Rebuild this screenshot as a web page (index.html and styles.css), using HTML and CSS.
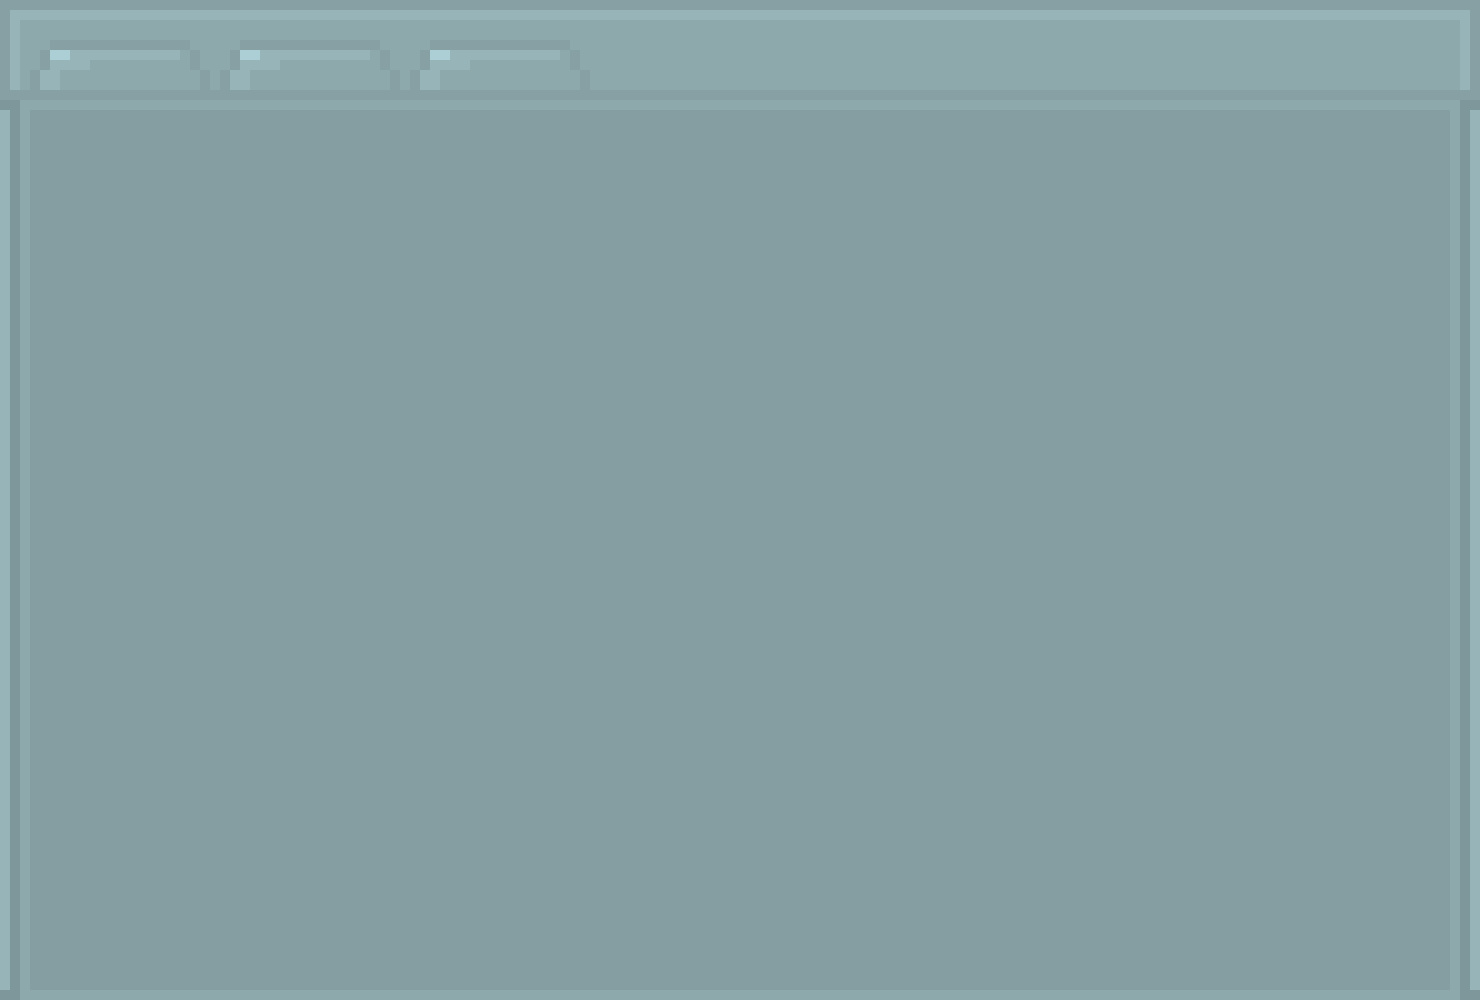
FILE: index.html
```html
<!DOCTYPE html>
<html lang="en">
<head>
<meta charset="utf-8">
<title>Window</title>
<link rel="stylesheet" href="styles.css">
</head>
<body>
<div class="screen">
  <header class="topbar">
    <nav class="tabs">
      <div class="tab">
        <svg width="180" height="50" viewBox="0 0 180 50" shape-rendering="crispEdges">
          <rect class="d" x="20" y="0" width="140" height="10"/>
          <rect class="d" x="10" y="10" width="10" height="20"/>
          <rect class="d" x="160" y="10" width="10" height="20"/>
          <rect class="d" x="0" y="30" width="10" height="20"/>
          <rect class="d" x="170" y="30" width="10" height="20"/>
          <rect class="h" x="20" y="10" width="20" height="10"/>
          <rect class="l" x="40" y="10" width="110" height="10"/>
          <rect class="l" x="20" y="20" width="40" height="10"/>
          <rect class="l" x="10" y="30" width="20" height="20"/>
        </svg>
      </div>
      <div class="tab">
        <svg width="180" height="50" viewBox="0 0 180 50" shape-rendering="crispEdges">
          <rect class="d" x="20" y="0" width="140" height="10"/>
          <rect class="d" x="10" y="10" width="10" height="20"/>
          <rect class="d" x="160" y="10" width="10" height="20"/>
          <rect class="d" x="0" y="30" width="10" height="20"/>
          <rect class="d" x="170" y="30" width="10" height="20"/>
          <rect class="h" x="20" y="10" width="20" height="10"/>
          <rect class="l" x="40" y="10" width="110" height="10"/>
          <rect class="l" x="20" y="20" width="40" height="10"/>
          <rect class="l" x="10" y="30" width="20" height="20"/>
        </svg>
      </div>
      <div class="tab">
        <svg width="180" height="50" viewBox="0 0 180 50" shape-rendering="crispEdges">
          <rect class="d" x="20" y="0" width="140" height="10"/>
          <rect class="d" x="10" y="10" width="10" height="20"/>
          <rect class="d" x="160" y="10" width="10" height="20"/>
          <rect class="d" x="0" y="30" width="10" height="20"/>
          <rect class="d" x="170" y="30" width="10" height="20"/>
          <rect class="h" x="20" y="10" width="20" height="10"/>
          <rect class="l" x="40" y="10" width="110" height="10"/>
          <rect class="l" x="20" y="20" width="40" height="10"/>
          <rect class="l" x="10" y="30" width="20" height="20"/>
        </svg>
      </div>
    </nav>
  </header>
  <main class="main">
    <div class="side"></div>
    <section class="panel"></section>
    <div class="side"></div>
  </main>
</div>
</body>
</html>
```
FILE: styles.css
```css
html, body {
  margin: 0;
  padding: 0;
  background: #86a0a4;
}
.screen {
  width: 1480px;
  height: 1000px;
  display: flex;
  flex-direction: column;
  background: #86a0a4;
  overflow: hidden;
}
.topbar {
  margin: 10px 10px 10px 10px;
  height: 80px;
  box-sizing: border-box;
  border: 10px solid #97b4b8;
  border-bottom: 0;
  background: #8ea9ac;
  padding: 20px 0 0 10px;
}
.tabs {
  display: flex;
  gap: 10px;
}
.tab {
  width: 180px;
  height: 50px;
}
.tab svg {
  display: block;
}
.tab .d { fill: #86a0a4; }
.tab .l { fill: #97b4b8; }
.tab .h { fill: #abcfd4; }
.main {
  flex: 1;
  display: flex;
  background: #7d979b;
}
.side {
  width: 10px;
  margin: 10px 0;
  background: #97b4b8;
}
.panel {
  flex: 1;
  margin: 0 10px;
  border: 10px solid #8ea9ac;
  background: #849ea2;
}
```
